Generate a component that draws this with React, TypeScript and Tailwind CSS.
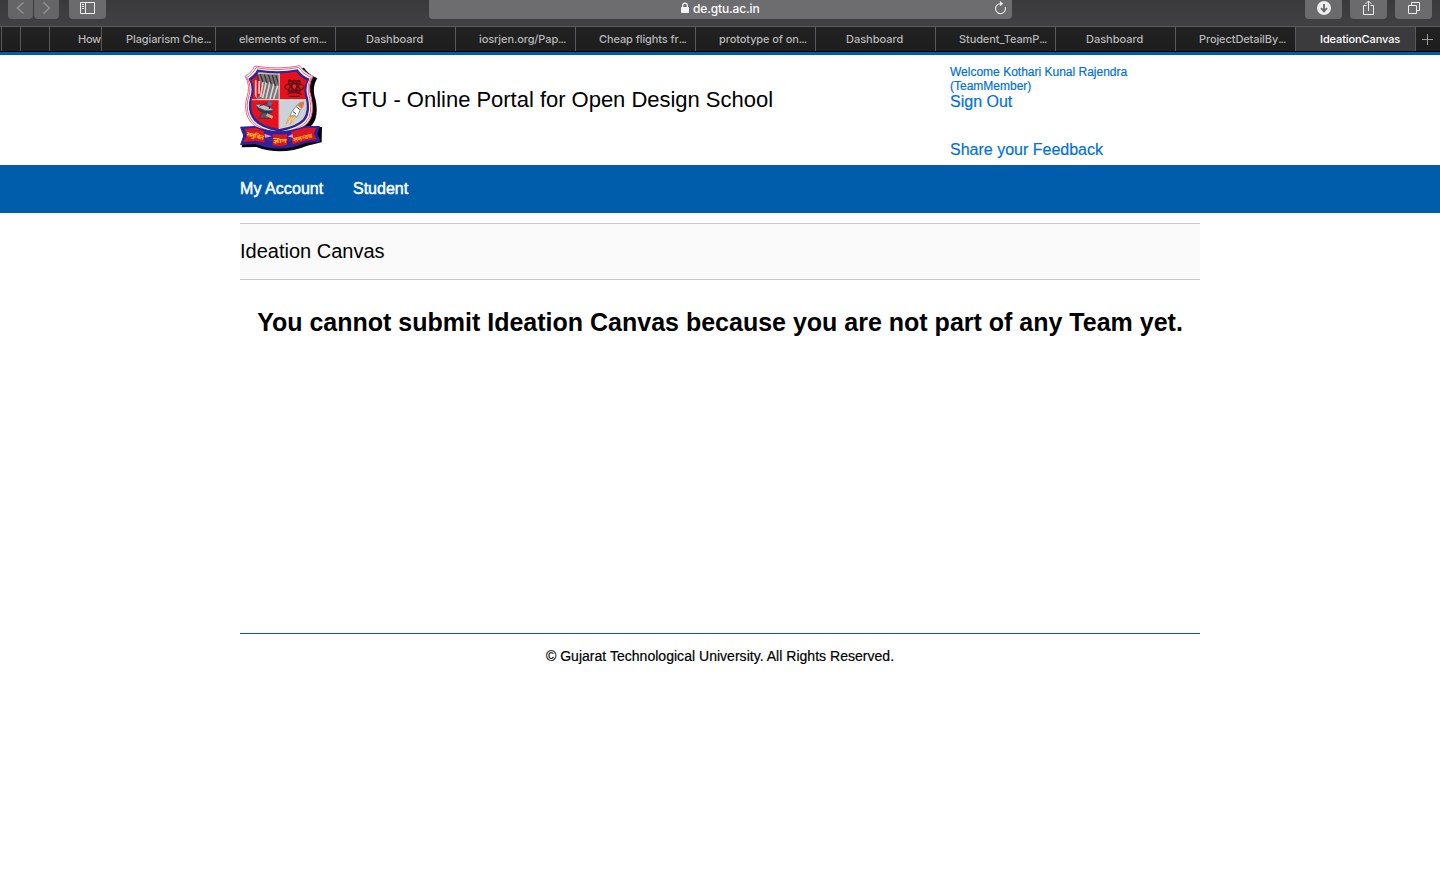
import React from "react";

const tabs = [
  { label: "", cls: "w-[19px]" },
  { label: "", cls: "w-[29px]" },
  { label: "How", cls: "w-[52px] pl-[28px] tracking-[-0.3px]" },
  { label: "Plagiarism Che", more: true, cls: "w-[114px] pl-[24px]" },
  { label: "elements of em", more: true, cls: "w-[120px] pl-[23px]" },
  { label: "Dashboard", cls: "w-[120px] pl-[30px]" },
  { label: "iosrjen.org/Pap", more: true, cls: "w-[120px] pl-[23px]" },
  { label: "Cheap flights fr", more: true, cls: "w-[120px] pl-[23px]" },
  { label: "prototype of on", more: true, cls: "w-[120px] pl-[23px]" },
  { label: "Dashboard", cls: "w-[120px] pl-[30px]" },
  { label: "Student_TeamP", more: true, cls: "w-[120px] pl-[23px]" },
  { label: "Dashboard", cls: "w-[120px] pl-[30px]" },
  { label: "ProjectDetailBy", more: true, cls: "w-[120px] pl-[23px]" },
];

function Crest() {
  const shield =
    "M74 29 Q145 41 209 28 Q222 48 249 60 Q231 88 244 125 Q254 175 233 200 Q210 225 148 236 Q84 225 63 198 Q40 170 49 128 Q64 88 45 60 Q66 48 74 29 Z";
  return (
    <svg className="h-[88px] w-[83px] shrink-0" viewBox="30 26 249 264" fill="none">
      <defs>
        <clipPath id="field">
          <path d={shield} transform="translate(147 132) scale(.83) translate(-147 -132)" />
        </clipPath>
      </defs>
      <path d={shield} transform="translate(13 6)" fill="#050505" />
      <path d={shield} fill="#fff" stroke="#e46a8c" strokeWidth="3" />
      <path d={shield} transform="translate(147 132) scale(.95) translate(-147 -132)" stroke="#e2567a" strokeWidth="3" />
      <path d={shield} transform="translate(147 132) scale(.9) translate(-147 -132)" fill="#2d2792" />
      <g clipPath="url(#field)">
        <path d="M40 30h215v205H40z" fill="#e8101c" />
        <path d="M76 40H147V129H76 L102 105Z" fill="#7d7479" />
        <g stroke="#d9d5d6" strokeWidth="5">
          <path d="M77 72 V126M88 74 L87 112M99 76 L92 122M109 76 L98 125M120 78 L108 127M132 82 L120 127M143 88 L131 127" />
        </g>
        <g stroke="#3a3136" strokeWidth="4">
          <path d="M82 54 l3 20M91 54 l8 24M103 54 l8 26M115 55 l9 29M127 56 l9 33M138 57 l9 31" />
        </g>
        <path d="M70 50 L148 53" stroke="#c9bfc3" strokeWidth="5" />
        <path d="M60 80 L80 129 H60Z" fill="#e8101c" />
        <path d="M148 131 H245 V235 H148Z" fill="#c9d3d7" />
        <path d="M147.5 40V235M50 130H245" stroke="#f6e6e8" strokeWidth="3" />
      </g>
      <g stroke="#651018" strokeWidth="4">
        <ellipse cx="193" cy="90" rx="8" ry="18" />
        <ellipse cx="193" cy="90" rx="8" ry="23" transform="rotate(45 193 90)" />
        <ellipse cx="193" cy="90" rx="8" ry="23" transform="rotate(-45 193 90)" />
        <ellipse cx="193" cy="92" rx="29" ry="11" />
        <path d="M170 114 Q193 104 215 114M176 120h34" />
        <path d="M176 70 l6 7M208 70 l-6 7" strokeWidth="7" />
      </g>
      <circle cx="193" cy="90" r="5" fill="#e62c26" />
      <path d="M103 163 L85 186 H121 L111 165Z" fill="#5d555f" stroke="#33303b" strokeWidth="2" />
      <path d="M78 147 Q83 171 119 174 L131 160Z" fill="#283a58" />
      <path d="M76 146 Q96 137 132 161 Q102 170 76 146Z" fill="#c7bdb9" stroke="#45475a" strokeWidth="2" />
      <path d="M88 149 L121 137 L118 158" stroke="#27314c" strokeWidth="3" />
      <path d="M117 133 l11 7 -6 10 -11-7Z" fill="#4377aa" />
      <path d="M112 171 l18 9 -4 7 -18-8Z" fill="#d4a98e" />
      <path d="M184 169 L197 151 Q208 136 221 137 Q222 151 210 162 L201 183 L192 176 L180 181Z" fill="#fff" stroke="#63606a" strokeWidth="2" />
      <path d="M201 147 Q211 137 221 137 Q222 148 214 157Z" fill="#e47532" />
      <path d="M199 151 l10 9M189 166 l9 7" stroke="#30343e" strokeWidth="3" />
      <path d="M186 177 L168 204 L176 183ZM197 181 L180 205 L188 180Z" fill="#ffe15a" stroke="#f28b27" strokeWidth="2" />
      <path d="M42 218 L78 216 Q150 244 228 214 L276 212 L275 258 L232 268 Q154 300 79 272 L35 273Z" fill="#080808" />
      <path d="M30 211 L73 209 Q148 239 224 209 L270 209 L262 233 L272 256 L228 259 Q150 292 76 263 L30 266 L40 239Z" fill="#30229a" />
      <path d="M44 217 L78 215 L102 225 L104 258 L75 254 L40 257 L51 237Z M128 233 Q150 237 171 232 L171 266 Q149 271 128 267Z M184 226 L224 214 L259 214 L251 233 L260 249 L226 253 L187 264Z" fill="#df1424" />
      <path d="M102 229 L128 237 V257 L104 251Z M171 237 L184 230 L187 252 L171 257Z" fill="#43249a" />
      <path d="M103 232 l22 8 -19 4ZM173 241 l14-8 3 11Z" fill="#e6a1b5" />
      <g fill="#ffc51d" fontFamily="Noto Sans, sans-serif" fontWeight="700" fontSize="19">
        <text x="49" y="239" transform="rotate(13 49 239)" textLength="52">समुचित</text>
        <text x="130" y="260" textLength="40" lengthAdjust="spacingAndGlyphs">ज्ञान</text>
        <text x="191" y="257" transform="rotate(-13 191 257)" textLength="58">समन्वय</text>
      </g>
    </svg>
  );
}

export default function App() {
  return (
    <div className="min-h-[889px] w-[1440px] overflow-hidden bg-white text-black [font-family:'Liberation_Sans',Arial,sans-serif]">
      <div className="[font-family:Inter,sans-serif]">
        <div className="flex h-[26px] items-start bg-gradient-to-b from-[#3a3a3c] to-[#414143] pl-2 text-white">
          <div className="flex h-[19px] w-[25px] items-center justify-center rounded-b-[4px] bg-[#656567]">
            <svg className="h-[19px] w-[25px]" viewBox="0 0 25 19" fill="none" stroke="#929294" strokeWidth="1.5"><path d="M15.5 2.5 L9.5 8 L15.5 13.5" /></svg>
          </div>
          <div className="ml-px flex h-[19px] w-[25px] items-center justify-center rounded-b-[4px] bg-[#656567]">
            <svg className="h-[19px] w-[25px]" viewBox="0 0 25 19" fill="none" stroke="#929294" strokeWidth="1.5"><path d="M9.5 2.5 L15.5 8 L9.5 13.5" /></svg>
          </div>
          <div className="ml-[10px] h-[19px] w-[37px] rounded-b-[4px] bg-[#6b6b6d]">
            <svg className="h-[19px] w-[37px]" viewBox="0 0 37 19" fill="none" stroke="#eee"><path d="M11.5 2.5h14v11h-14zM16.5 2.5v11M13 4.5h2M13 6.5h2M13 8.5h2" /></svg>
          </div>
          <div className="ml-[323px] flex h-[19px] w-[583px] rounded-b-[4px] bg-[#6d6d6f] pl-[251px]">
            <svg className="h-[19px] w-[10px]" viewBox="0 0 10 19" fill="none"><rect x="1" y="7" width="8" height="6" rx=".8" fill="#f2f2f2" /><path d="M2.7 7V5.5a2.3 2.3 0 0 1 4.6 0V7" stroke="#f2f2f2" strokeWidth="1.2" /></svg>
            <span className="ml-[3px] w-[80px] text-[12px] font-medium leading-[17px] tracking-[-0.13px]">de.gtu.ac.in</span>
            <svg className="ml-[220px] h-[19px] w-[15px]" viewBox="0 0 15 19" fill="none" stroke="#eee" strokeWidth="1.1"><path d="M12.2 7A5 5 0 1 1 7.5 3.7" /><path d="M7 1.2l3 2.5-3 2.3z" fill="#eee" strokeWidth=".3" /></svg>
          </div>
          <div className="ml-[293px] h-[19px] w-[37px] rounded-b-[4px] bg-[#6b6b6d]">
            <svg className="h-[19px] w-[37px]" viewBox="0 0 37 19" fill="none"><circle cx="19" cy="8" r="7" fill="#eee" /><path d="M19 4v6M16 8l3 3.3L22 8" stroke="#656567" strokeWidth="1.8" /></svg>
          </div>
          <div className="ml-2 h-[19px] w-[37px] rounded-b-[4px] bg-[#6b6b6d]">
            <svg className="h-[19px] w-[37px]" viewBox="0 0 37 19" fill="none" stroke="#eee"><path d="M16.5 5.5h-3v9h10v-9h-3M18.5 11V1M15.5 4l3-3 3 3" /></svg>
          </div>
          <div className="ml-2 h-[19px] w-[37px] rounded-b-[4px] bg-[#6b6b6d]">
            <svg className="h-[19px] w-[37px]" viewBox="0 0 37 19" fill="none" stroke="#eee"><path d="M13.5 5.5h8v8h-8zM16.5 5V2.5h8v8H22" /></svg>
          </div>
        </div>
        <div className="flex h-[25px] border-t border-[#5c5c5e] bg-gradient-to-b from-[#222223] to-[#1d1d1e] pl-px text-[11px] font-medium leading-[24px] text-[#b8b8b9]">
          {tabs.map((tab, i) => (
            <div key={i} className={`shrink-0 whitespace-nowrap border-l border-[#59595b] ${tab.cls}`}>
              {tab.more ? <span className="tracking-[-0.1px]">{tab.label}<span className="tracking-[-0.9px]">...</span></span> : tab.label}
            </div>
          ))}
          <div className="w-[120px] shrink-0 whitespace-nowrap border-l border-[#59595b] bg-[#3b3b3d] pl-6 tracking-[-0.1px] text-white">IdeationCanvas</div>
          <div className="w-[25px] shrink-0 border-l border-[#59595b]">
            <svg className="h-[24px] w-[24px]" viewBox="0 0 24 24" stroke="#9a9a9c"><path d="M6 12.5h11M11.5 7v11" /></svg>
          </div>
        </div>
        <div className="h-px bg-black" />
        <div className="h-[3px] bg-[#005dab]" />
      </div>

      <header className="mx-auto flex h-[110px] w-[960px] items-start">
        <div className="pt-[10px]"><Crest /></div>
        <h1 className="ml-[18px] w-[609px] pt-[32px] text-[22px] leading-[25px] tracking-[-0.02px]">GTU - Online Portal for Open Design School</h1>
        <div className="w-[200px] pt-[10px] text-[16px] text-[#0072d6] [-webkit-text-stroke:0.2px_#0072d6]">
          <p className="text-[12px] leading-[14px]">Welcome Kothari Kunal Rajendra<br />(TeamMember)</p>
          <p className="leading-[17px]">Sign Out</p>
          <p className="mt-[31px] leading-[17px]">Share your Feedback</p>
        </div>
      </header>

      <nav className="h-[48px] bg-[#005dab]">
        <div className="mx-auto flex h-full w-[960px] text-[16px] leading-[47px] text-white [-webkit-text-stroke:0.5px_white]">
          <span className="w-[113px] tracking-[0.06px]">My Account</span><span>Student</span>
        </div>
      </nav>

      <main className="mx-auto h-[420px] w-[960px] pt-[10px]">
        <h2 className="h-[57px] border-y border-[#c8c8c8] bg-[#fafafa] text-[20px] leading-[55px]">Ideation Canvas</h2>
        <p className="mt-[27px] whitespace-nowrap text-center text-[25px] font-bold leading-[30px]">You cannot submit Ideation Canvas because you are not part of any Team yet.</p>
      </main>
      <footer className="mx-auto w-[960px] border-t border-[#005dab] pt-[14px] text-center text-[14px] leading-[17px] tracking-[0.025px] [-webkit-text-stroke:0.2px_black]">© Gujarat Technological University. All Rights Reserved.</footer>
    </div>
  );
}
